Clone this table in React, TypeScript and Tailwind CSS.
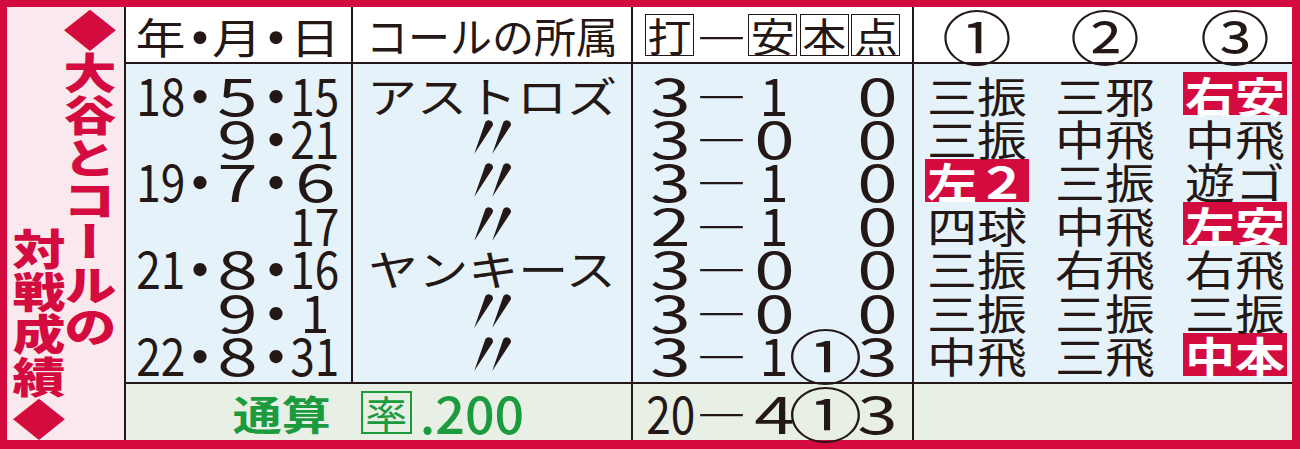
import React from "react";

function N({ s }: { s: string }) {
  if (s.length === 1 && s !== "1") {
    return <span className="inline-block scale-x-[1.4]">{s}</span>;
  }
  if (s.length === 1) return <span className="inline-block">{s}</span>;
  return <span className="inline-block scale-x-[0.85]">{s}</span>;
}

function Ditto() {
  return (
    <svg width="42" height="36" viewBox="0 0 42 36">
      <path d="M14.4 3.0 A4.2 4.2 0 0 1 21.8 6.6 L3.2 35 Z" fill="#231815" />
      <path d="M32.4 3.0 A4.2 4.2 0 0 1 39.8 6.6 L21.2 35 Z" fill="#231815" />
    </svg>
  );
}

type Row = {
  y?: string;
  m?: string;
  d: string;
  team: string | null;
  s: [string, string, string | null, string];
  p: [string, boolean][];
};

const rows: Row[] = [
  { y: "18", m: "5", d: "15", team: "アストロズ", s: ["3", "1", null, "0"], p: [["三振", false], ["三邪", false], ["右安", true]] },
  { m: "9", d: "21", team: null, s: ["3", "0", null, "0"], p: [["三振", false], ["中飛", false], ["中飛", false]] },
  { y: "19", m: "7", d: "6", team: null, s: ["3", "1", null, "0"], p: [["左２", true], ["三振", false], ["遊ゴ", false]] },
  { d: "17", team: null, s: ["2", "1", null, "0"], p: [["四球", false], ["中飛", false], ["左安", true]] },
  { y: "21", m: "8", d: "16", team: "ヤンキース", s: ["3", "0", null, "0"], p: [["三振", false], ["右飛", false], ["右飛", false]] },
  { m: "9", d: "1", team: null, s: ["3", "0", null, "0"], p: [["三振", false], ["三振", false], ["三振", false]] },
  { y: "22", m: "8", d: "31", team: null, s: ["3", "1", "①", "3"], p: [["中飛", false], ["三飛", false], ["中本", true]] },
];

function Dot() {
  return <span className="flex justify-center text-[62px]">・</span>;
}

function DateRow({ y, m, d }: { y?: string; m?: string; d: string }) {
  return (
    <div className="grid grid-cols-[55px_24px_50px_28px_50px] grid-rows-[43.4px] h-[43.4px] items-center text-[52px] leading-none">
      <span className="flex justify-center">{y && <N s={y} />}</span>
      {y ? <Dot /> : <span />}
      <span className="flex justify-center">{m && <N s={m} />}</span>
      {m ? <Dot /> : <span />}
      <span className="flex justify-center">
        <N s={d} />
      </span>
    </div>
  );
}

function ScoreRow({ s, total = false }: { s: [string, string, string | null, string]; total?: boolean }) {
  return (
    <div
      className={`grid grid-cols-[repeat(5,51.6px)] ${
        total ? "grid-rows-[56px] h-[56px]" : "grid-rows-[43.4px] h-[43.4px]"
      } items-center text-[52px] leading-none`}
    >
      <span className="flex justify-center">
        <N s={s[0]} />
      </span>
      <span className="flex justify-start text-[50px] font-medium">―</span>
      <span className="flex justify-center">
        <N s={s[1]} />
      </span>
      <span className="flex justify-center">
        {s[2] && <span className="inline-block text-[74px] scale-y-[0.82]">{s[2]}</span>}
      </span>
      <span className="flex justify-center">
        <N s={s[3]} />
      </span>
    </div>
  );
}

function Play({ t, hl }: { t: string; hl: boolean }) {
  if (hl) {
    return (
      <span className="-ml-[2px] w-[104px] h-[43px] bg-[#d40b3e] text-white font-bold flex items-center justify-center">
        <span className="inline-block scale-y-[0.85] text-[50px] leading-none">{t}</span>
      </span>
    );
  }
  return (
    <span className="w-[100px] flex justify-center">
      <span className="inline-block scale-y-[0.85] text-[50px] leading-none">{t}</span>
    </span>
  );
}

export default function App() {
  return (
    <div className="w-[1300px] h-[449px] bg-[#d40b3e] pt-[7px] pl-[7px] pr-[8px] pb-[9px] font-['Noto_Sans_CJK_JP',sans-serif] text-[#231815]">
      <div className="flex h-[433px]">
        {/* title panel */}
        <div className="w-[117px] shrink-0 bg-[#f9e8ee] flex flex-row-reverse gap-x-[1px] pr-[9px] text-[#d40b3e] font-black text-[53px] leading-[50px]">
          <div className="w-[50px] self-start mt-[2px] [writing-mode:vertical-rl] origin-top scale-y-[0.8]">◆大谷とコールの</div>
          <div className="w-[50px] self-end [writing-mode:vertical-rl] origin-bottom scale-y-[0.8]">対戦成績◆</div>
        </div>

        <div className="flex-1 flex flex-col gap-y-[2px] bg-[#231815] pl-[2px]">
          {/* header */}
          <div className="grid grid-cols-[225px_278px_279px_378px] grid-rows-[55px] gap-x-[2px] h-[55px] shrink-0">
            <div className="bg-white pl-[7px]">
              <div className="grid grid-cols-[55px_24px_50px_28px_50px] grid-rows-[55px] h-[55px] items-center text-[50px] leading-none">
                <span className="flex justify-center"><span className="inline-block scale-y-[0.85]">年</span></span>
                <span className="flex justify-center text-[60px]">・</span>
                <span className="flex justify-center"><span className="inline-block scale-y-[0.85]">月</span></span>
                <span className="flex justify-center text-[60px]">・</span>
                <span className="flex justify-center"><span className="inline-block scale-y-[0.85]">日</span></span>
              </div>
            </div>
            <div className="bg-white flex items-center justify-center text-[42px] leading-none">コールの所属</div>
            <div className="bg-white pl-[12px]">
              <div className="grid grid-cols-[repeat(5,51.6px)] grid-rows-[55px] h-[55px] items-center leading-none">
                {["打", "―", "安", "本", "点"].map((c, i) =>
                  c === "―" ? (
                    <span key={i} className="text-[50px] font-medium">―</span>
                  ) : (
                    <span key={i} className="w-[49px] h-[42px] border-[1.5px] border-[#231815] flex items-center justify-center text-[44px]">
                      <span className="inline-block scale-y-[0.9]">{c}</span>
                    </span>
                  )
                )}
              </div>
            </div>
            <div className="bg-white pl-[13px]">
              <div className="grid grid-cols-[128px_130px_100px] grid-rows-[55px] h-[55px] items-center leading-none">
                {["①", "②", "③"].map((c) => (
                  <span key={c} className="w-[100px] flex justify-center">
                    <span className="inline-block text-[70px] scale-y-[0.86]">{c}</span>
                  </span>
                ))}
              </div>
            </div>
          </div>

          {/* data */}
          <div className="grid grid-cols-[225px_278px_279px_378px] grid-rows-[318px] gap-x-[2px] h-[318px] shrink-0">
            <div className="bg-[#e5f2fa] pt-[8px] pl-[7px] flex flex-col">
              {rows.map((r, i) => (
                <DateRow key={i} y={r.y} m={r.m} d={r.d} />
              ))}
            </div>
            <div className="bg-[#e5f2fa] pt-[8px] flex flex-col">
              {rows.map((r, i) => (
                <div key={i} className="h-[43.4px] flex items-center justify-center leading-none">
                  {r.team ? (
                    <span className="inline-block text-[50px] scale-y-[0.85]">{r.team}</span>
                  ) : (
                    <Ditto />
                  )}
                </div>
              ))}
            </div>
            <div className="bg-[#e5f2fa] pt-[8px] pl-[12px] flex flex-col">
              {rows.map((r, i) => (
                <ScoreRow key={i} s={r.s} />
              ))}
            </div>
            <div className="bg-[#e5f2fa] pt-[8px] pl-[13px] flex flex-col">
              {rows.map((r, i) => (
                <div key={i} className="grid grid-cols-[128px_130px_100px] grid-rows-[43.4px] h-[43.4px] items-center">
                  {r.p.map(([t, hl], j) => (
                    <Play key={j} t={t} hl={hl} />
                  ))}
                </div>
              ))}
            </div>
          </div>

          {/* total */}
          <div className="grid grid-cols-[505px_279px_378px] grid-rows-[56px] gap-x-[2px] h-[56px] shrink-0">
            <div className="bg-[#e8f0e6] flex items-center justify-center text-[#1b9a3e] leading-none">
              <span className="inline-block text-[49px] font-bold scale-y-[0.82]">通算</span>
              <span className="ml-[30px] w-[51px] h-[43px] border-2 border-[#1b9a3e] flex items-center justify-center">
                <span className="inline-block text-[42px] scale-y-[0.9]">率</span>
              </span>
              <span className="ml-[8px] text-[52px] font-medium inline-block">.200</span>
            </div>
            <div className="bg-[#e8f0e6] pl-[12px]">
              <ScoreRow s={["20", "4", "①", "3"]} total />
            </div>
            <div className="bg-[#e8f0e6]" />
          </div>
        </div>
      </div>
    </div>
  );
}
